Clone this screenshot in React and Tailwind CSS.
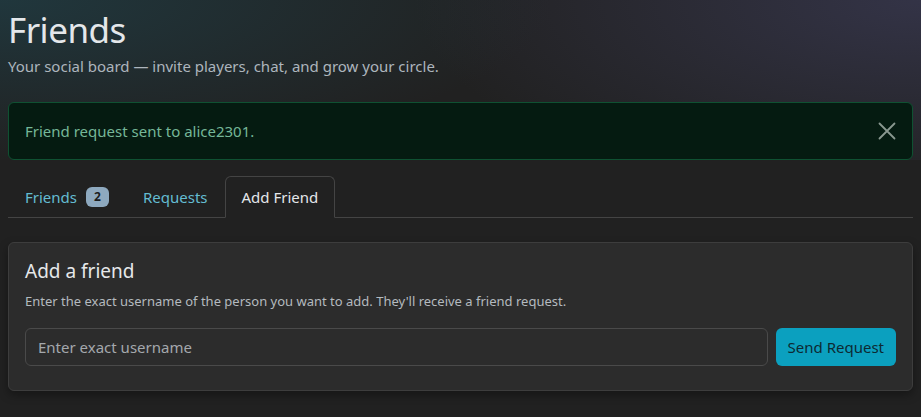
const tabs = [
  { label: "Friends", count: 2 },
  { label: "Requests" },
  { label: "Add Friend", active: true },
];

function Tabs() {
  return (
    <ul className="flex border-b border-[#444] mb-6">
      {tabs.map((t) => (
        <li key={t.label} className="-mb-px">
          <button
            className={
              t.active
                ? "flex items-center gap-[9px] px-4 py-2 leading-6 rounded-t-md border border-[#444] border-b-[#212121] bg-[#212121] text-[#e4e7ea]"
                : "flex items-center gap-[9px] px-4 py-2 leading-6 rounded-t-md border border-transparent text-[#64bcd2]"
            }
          >
            {t.label}
            {t.count != null && (
              <span className="w-[23px] text-center rounded-md bg-[#8ea9bf] text-[#1a1d20] text-[12px] font-bold leading-5">
                {t.count}
              </span>
            )}
          </button>
        </li>
      ))}
    </ul>
  );
}

function CloseIcon() {
  return (
    <svg width="18" height="18" viewBox="0 0 18 18" className="text-[#8a9890]">
      <path d="M1.5 1.5 L16.5 16.5 M16.5 1.5 L1.5 16.5" stroke="currentColor" strokeWidth="1.8" strokeLinecap="round" />
    </svg>
  );
}

export default function App() {
  return (
    <div
      className="min-h-screen bg-[#212121] text-[15px] text-[#dee2e6]"
      style={{ fontFamily: '"Noto Sans", "Open Sans", sans-serif' }}
    >
      <div className="bg-[radial-gradient(ellipse_60%_160px_at_0%_0%,rgba(32,62,70,0.75),transparent),radial-gradient(ellipse_55%_200px_at_100%_0%,rgba(56,56,80,0.8),transparent)] px-2 pt-[10px]">
        <h1 className="text-[35px] leading-[40px] tracking-[-0.5px] text-[#e4e7ea] mb-1">Friends</h1>
        <p className="text-[#adb5bd] leading-6 mb-6">
          Your social board — invite players, chat, and grow your circle.
        </p>

        <div className="flex items-center justify-between rounded-md border border-[#0f5132] bg-[#051b11] p-4 mb-4 text-[#75b798] leading-6">
          <span>Friend request sent to alice2301.</span>
          <CloseIcon />
        </div>
      </div>

      <div className="px-2">
        <Tabs />

        <div className="rounded-md border border-[#3d3d3d] bg-[#2c2c2c] shadow-[0_4px_10px_rgba(0,0,0,0.35)]">
          <div className="p-4 pb-6">
            <h5 className="text-[19px] leading-6 mb-2 text-[#e6e8ea]">Add a friend</h5>
            <p className="text-[13px] leading-[21px] text-[#b4babf] mb-4">
              Enter the exact username of the person you want to add. They'll receive a friend request.
            </p>
            <div className="flex gap-2">
              <input
                className="flex-1 h-[38px] rounded-md border border-[#4a4a4a] bg-[#2c2c2c] px-3 text-[#dee2e6] placeholder:text-[#a4a8ac] outline-none"
                placeholder="Enter exact username"
              />
              <button className="h-[38px] rounded-md bg-[#0ba0bf] px-3 text-[#0d2a33]">
                Send Request
              </button>
            </div>
          </div>
        </div>
      </div>
    </div>
  );
}
